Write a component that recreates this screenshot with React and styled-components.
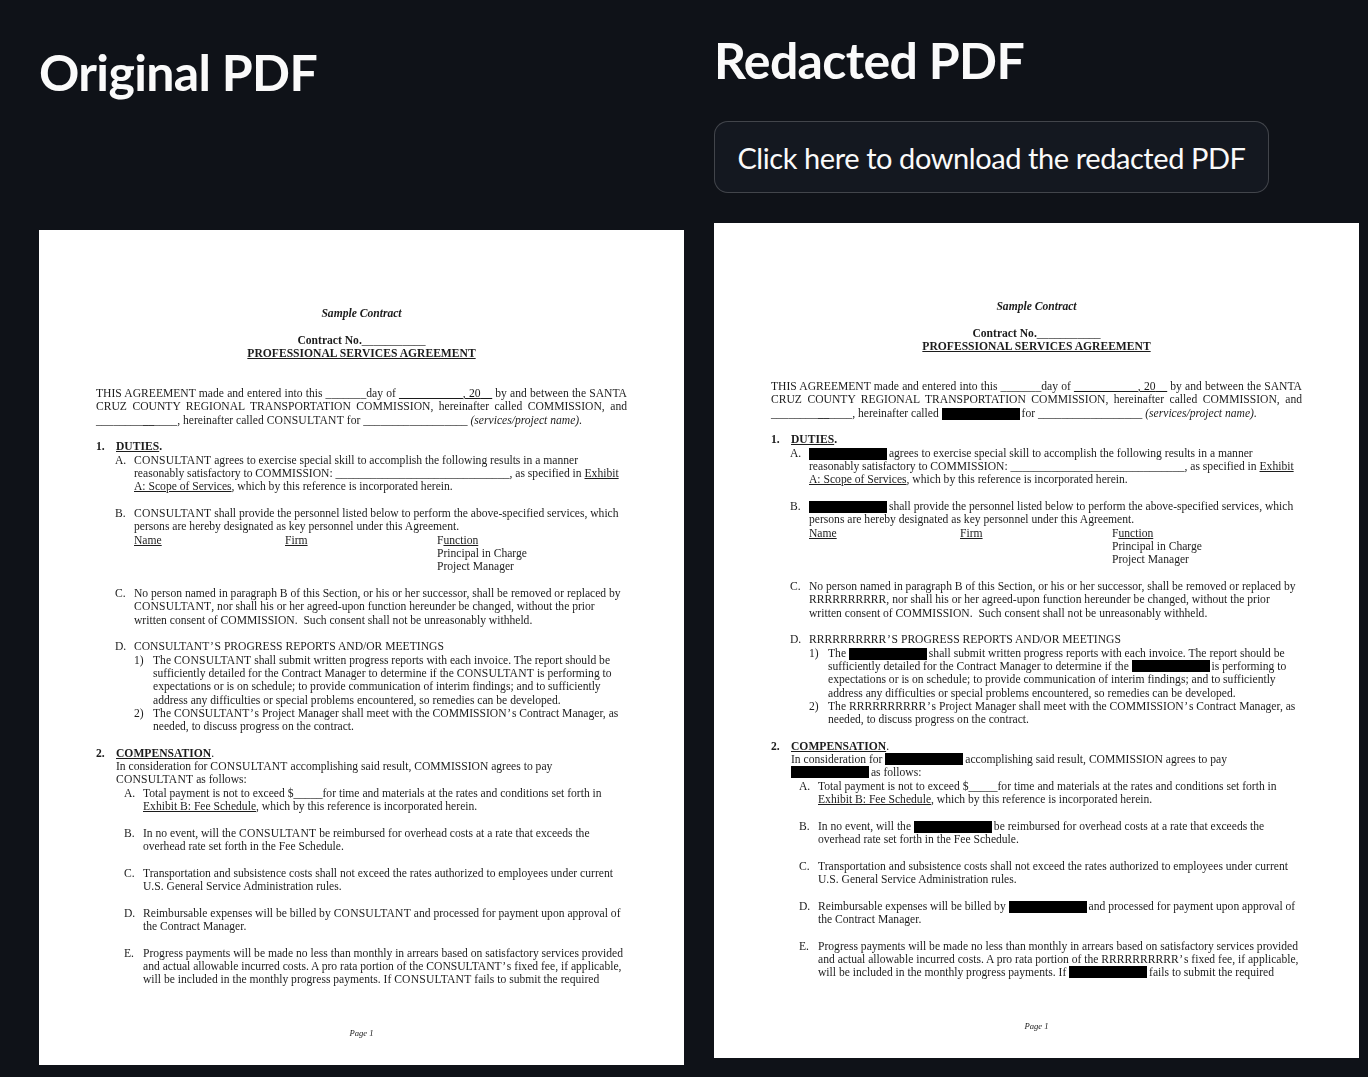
import styled, { createGlobalStyle } from 'styled-components';

const GlobalStyle = createGlobalStyle`
  html, body {
    margin: 0;
    background: #0f1218;
    color: #fafafa;
    font-family: Lato, "Noto Sans", sans-serif;
  }
`;

const Columns = styled.main`
  display: grid;
  grid-template-columns: 645px 645px;
  column-gap: 30px;
  padding-left: 39px;
  height: 1077px;
  overflow: hidden;
`;

const Column = styled.section`
  display: flex;
  flex-direction: column;
  padding-top: ${(p) => p.$top}px;
`;

const Title = styled.h1`
  margin: 0;
  height: ${(p) => p.$height}px;
  font-size: 50px;
  line-height: 60px;
  font-weight: 700;
  letter-spacing: -0.65px;
  color: #fafafa;
`;

const DownloadButton = styled.button`
  width: 555px;
  height: 72px;
  margin-bottom: 30px;
  border: 1px solid rgba(250, 250, 250, 0.2);
  border-radius: 14px;
  background: #141820;
  color: #fafafa;
  font-family: Lato, "Noto Sans", sans-serif;
  font-size: 29px;
  letter-spacing: -0.42px;
  padding: 0;
`;

const Sheet = styled.article`
  box-sizing: border-box;
  width: 645px;
  height: 835px;
  padding: 77px 57px 0;
  background: #fff;
  color: #1c1c1c;
  font-family: "Liberation Serif", "Times New Roman", serif;
  font-size: 11.6px;
  line-height: 13.33px;
`;

const SheetText = styled.div`
  filter: blur(0.45px);
`;

const Line = styled.div`
  display: flex;
  white-space: ${(p) => (p.$justify ? 'normal' : 'pre')};
  margin-top: ${(p) => (p.$gap || 0) * 13.33}px;
  padding-left: ${(p) => p.$indent || 0}px;
  justify-content: ${(p) => (p.$center ? 'center' : 'flex-start')};
`;

const Marker = styled.span`
  flex: none;
  width: ${(p) => (p.$bold ? 20 : 19)}px;
  font-weight: ${(p) => (p.$bold ? 700 : 400)};
`;

const Body = styled.span`
  flex: 1;
  text-align: ${(p) => (p.$justify ? 'justify' : 'left')};
  text-align-last: ${(p) => (p.$justify ? 'justify' : 'auto')};
`;

const U = styled.span`
  text-decoration: underline;
`;

const Heading = styled.span`
  font-weight: 700;
  text-decoration: underline;
`;

const Strong = styled.span`
  font-weight: 700;
`;

const Em = styled.span`
  font-style: italic;
`;

const Footer = styled.span`
  font-style: italic;
  font-size: 8.6px;
`;

const Tab = styled.span`
  display: inline-block;
  width: ${(p) => p.$width}px;
`;

const Name = styled.span`
  letter-spacing: 0.2px;
`;

const Apos = styled.span`
  margin: 0 0.7px;
`;

const Bar = styled.span`
  display: inline-block;
  width: 78px;
  height: 12px;
  margin-right: -1px;
  background: #000;
  vertical-align: -3px;
`;

function Contract({ redacted }) {
  const who = redacted ? <Bar /> : <Name>CONSULTANT</Name>;
  const rep = redacted ? 'RRRRRRRRRR' : 'CONSULTANT';
  const apos = <Apos>’</Apos>;

  return (
    <SheetText>
      <Line $center><Strong><Em>Sample Contract</Em></Strong></Line>
      <Line $center $gap={1}><Strong>Contract No.</Strong>___________</Line>
      <Line $center><Heading>PROFESSIONAL SERVICES AGREEMENT</Heading></Line>

      <Line $gap={2} $justify><Body $justify>THIS AGREEMENT made and entered into this _______day of <U><Strong>___________</Strong>, 20<Strong>__</Strong></U> by and between the SANTA</Body></Line>
      <Line $justify><Body $justify>CRUZ COUNTY REGIONAL TRANSPORTATION COMMISSION, hereinafter called COMMISSION, and</Body></Line>
      <Line><Body>________<Strong>__</Strong>____, hereinafter called {who} for __________________ <Em>(services/project name).</Em></Body></Line>

      <Line $gap={1}><Marker $bold>1.</Marker><Heading>DUTIES</Heading><Strong>.</Strong></Line>
      <Line $indent={19}><Marker>A.</Marker><Body>{who} agrees to exercise special skill to accomplish the following results in a manner</Body></Line>
      <Line $indent={38}>reasonably satisfactory to COMMISSION: ______________________________, as specified in <U>Exhibit</U></Line>
      <Line $indent={38}><U>A: Scope of Services</U>, which by this reference is incorporated herein.</Line>

      <Line $indent={19} $gap={1}><Marker>B.</Marker><Body>{who} shall provide the personnel listed below to perform the above-specified services, which</Body></Line>
      <Line $indent={38}>persons are hereby designated as key personnel under this Agreement.</Line>
      <Line $indent={38}><Tab $width={151}><U>Name</U></Tab><Tab $width={152}><U>Firm</U></Tab>F<U>unction</U></Line>
      <Line $indent={341}>Principal in Charge</Line>
      <Line $indent={341}>Project Manager</Line>

      <Line $indent={19} $gap={1}><Marker>C.</Marker><Body>No person named in paragraph B of this Section, or his or her successor, shall be removed or replaced by</Body></Line>
      <Line $indent={38}>{redacted ? rep : who}, nor shall his or her agreed-upon function hereunder be changed, without the prior</Line>
      <Line $indent={38}>written consent of COMMISSION.  Such consent shall not be unreasonably withheld.</Line>

      <Line $indent={19} $gap={1}><Marker>D.</Marker><Body>{rep}{apos}S PROGRESS REPORTS AND/OR MEETINGS</Body></Line>
      <Line $indent={38}><Marker>1)</Marker><Body>The {who} shall submit written progress reports with each invoice. The report should be</Body></Line>
      <Line $indent={57}>sufficiently detailed for the Contract Manager to determine if the {who} is performing to</Line>
      <Line $indent={57}>expectations or is on schedule; to provide communication of interim findings; and to sufficiently</Line>
      <Line $indent={57}>address any difficulties or special problems encountered, so remedies can be developed.</Line>
      <Line $indent={38}><Marker>2)</Marker><Body>The {rep}{apos}s Project Manager shall meet with the COMMISSION{apos}s Contract Manager, as</Body></Line>
      <Line $indent={57}>needed, to discuss progress on the contract.</Line>

      <Line $gap={1}><Marker $bold>2.</Marker><Heading>COMPENSATION</Heading>.</Line>
      <Line $indent={20}>In consideration for {who} accomplishing said result, COMMISSION agrees to pay</Line>
      <Line $indent={20}>{who} as follows:</Line>
      <Line $indent={28}><Marker>A.</Marker><Body>Total payment is not to exceed $_____for time and materials at the rates and conditions set forth in</Body></Line>
      <Line $indent={47}><U>Exhibit B: Fee Schedule</U>, which by this reference is incorporated herein.</Line>

      <Line $indent={28} $gap={1}><Marker>B.</Marker><Body>In no event, will the {who} be reimbursed for overhead costs at a rate that exceeds the</Body></Line>
      <Line $indent={47}>overhead rate set forth in the Fee Schedule.</Line>

      <Line $indent={28} $gap={1}><Marker>C.</Marker><Body>Transportation and subsistence costs shall not exceed the rates authorized to employees under current</Body></Line>
      <Line $indent={47}>U.S. General Service Administration rules.</Line>

      <Line $indent={28} $gap={1}><Marker>D.</Marker><Body>Reimbursable expenses will be billed by {who} and processed for payment upon approval of</Body></Line>
      <Line $indent={47}>the Contract Manager.</Line>

      <Line $indent={28} $gap={1}><Marker>E.</Marker><Body>Progress payments will be made no less than monthly in arrears based on satisfactory services provided</Body></Line>
      <Line $indent={47}>and actual allowable incurred costs. A pro rata portion of the {rep}{apos}s fixed fee, if applicable,</Line>
      <Line $indent={47}>will be included in the monthly progress payments. If {who} fails to submit the required</Line>

      <Line $center $gap={3}><Footer>Page 1</Footer></Line>
    </SheetText>
  );
}

const App = () => (
  <>
    <GlobalStyle />
    <Columns>
      <Column $top={42}>
        <Title $height={188}>Original PDF</Title>
        <Sheet><Contract /></Sheet>
      </Column>
      <Column $top={30}>
        <Title $height={91}>Redacted PDF</Title>
        <DownloadButton>Click here to download the redacted PDF</DownloadButton>
        <Sheet><Contract redacted /></Sheet>
      </Column>
    </Columns>
  </>
);

export default App;
